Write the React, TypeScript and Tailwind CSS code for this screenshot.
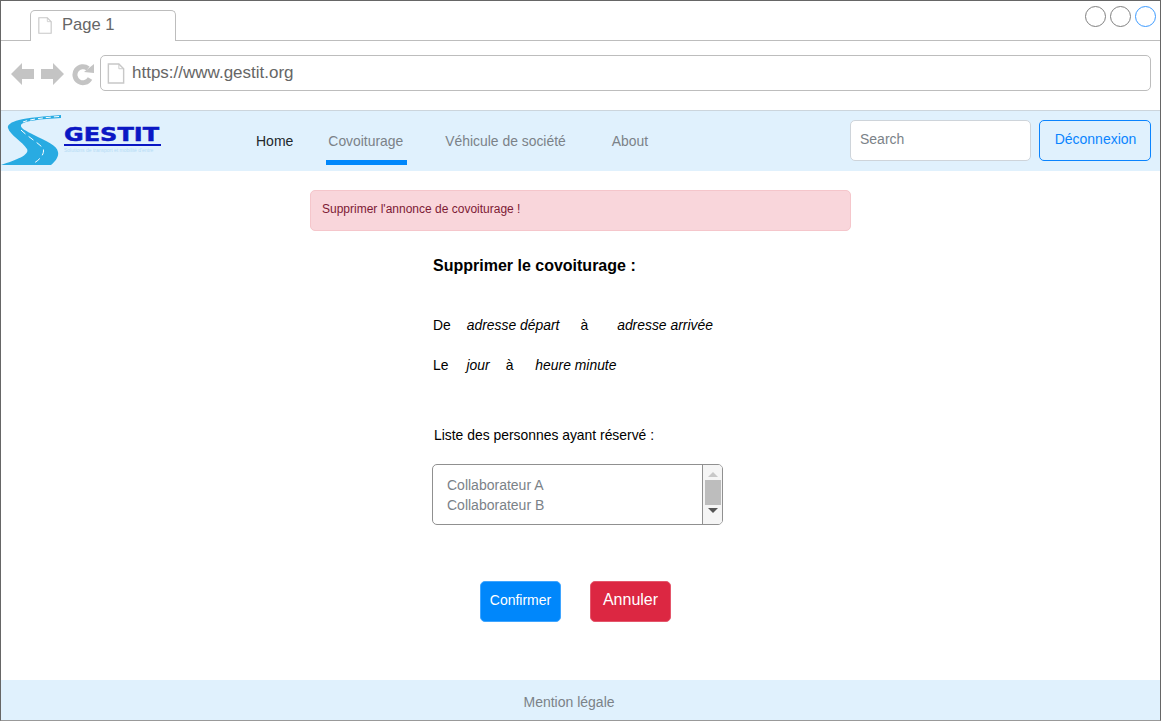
function PageIcon({ className }: { className: string }) {
  return (
    <svg className={className} viewBox="0 0 18 22" fill="#fff" stroke="#c8c8c8" strokeWidth="1.5">
      <path d="M1 1h11l5 5v15H1z" />
      <path d="M12 1v5h5" fill="none" strokeWidth="1" />
    </svg>
  );
}

function NavIcons() {
  return (
    <div className="mt-[7px] flex items-center">
      <svg className="ml-[10px] h-6 w-[23px]" viewBox="0 0 23 24" fill="#c4c4c4">
        <path d="M0 12L11 1v6h12v10H11v6z" />
      </svg>
      <svg className="ml-[7px] h-6 w-[23px]" viewBox="0 0 23 24" fill="#c4c4c4">
        <path d="M23 12L12 1v6H0v10h12v6z" />
      </svg>
      <svg className="ml-[8px] h-6 w-[23px]" viewBox="0 0 23 24" fill="none">
        <path d="M18 16.5A8 8 0 1 1 16 6.5" stroke="#c4c4c4" strokeWidth="5" />
        <path d="M12 10L22 2v9z" fill="#c4c4c4" />
      </svg>
    </div>
  );
}

function Logo() {
  return (
    <div className="flex h-full w-[170px] shrink-0">
      <svg className="mt-[4px] h-[50px] w-[60px] shrink-0" viewBox="0 0 60 50">
        <path
          d="M60 0C45 1 25 3 18 5C10 7 6 10 7 13C9 20 22 27 26 34C29 40 15 45 0 50L50 50C55 46 58 41 57 37C56 30 45 26 33 20C25 16 19 13 20 10C22 6 40 4 60 3Z"
          fill="#29abe2"
        />
        <path d="M58 1.5C44 2.5 30 4 22 7" stroke="#fff" strokeWidth="1" strokeDasharray="5 3" fill="none" />
        <path d="M20 15C26 21 36 27 42 33C44 38 40 44 33 48" stroke="#fff" strokeWidth="1" strokeDasharray="6 4" fill="none" />
      </svg>
      <div className="ml-[3px] mt-[14px] flex w-[97px] flex-col">
        <span className="origin-left scale-x-[1.2] whitespace-nowrap font-['DejaVu_Sans'] text-[20px] font-bold leading-[19px] text-[#0a17c4] [-webkit-text-stroke:0.5px_#0a17c4]">GESTIT</span>
        <div className="h-[2px] w-full bg-[#0a17c4]" />
        <span className="mt-[1px] whitespace-nowrap text-[5px] leading-[6px] text-[#b5dcf5]">Solutions de transport et mobilité d'entre</span>
      </div>
    </div>
  );
}

export default function App() {
  return (
    <div className="flex h-[721px] w-[1161px] flex-col overflow-hidden border border-[#666] border-b-[#999] bg-white font-['Liberation_Sans',sans-serif]">
      {/* browser chrome */}
      <div className="flex h-[40px] shrink-0 items-end justify-between border-b border-[#bdbdbd]">
        <div className="relative top-px ml-[29px] flex h-[31px] w-[146px] items-center rounded-t-[5px] border border-b-0 border-[#bdbdbd] bg-white pb-[2px]">
          <PageIcon className="ml-[6px] h-[17px] w-[16px]" />
          <span className="ml-[9px] text-[16.6px] text-[#666]">Page 1</span>
        </div>
        <div className="mb-[13px] mr-[4px] flex gap-[4px]">
          <div className="size-[21px] rounded-full border border-[#808080]" />
          <div className="size-[21px] rounded-full border border-[#808080]" />
          <div className="size-[21px] rounded-full border border-[#3d9bff]" />
        </div>
      </div>
      <div className="flex h-[69px] shrink-0 items-start pr-[9px] pt-[14px]">
        <NavIcons />
        <div className="ml-[5px] flex h-[36px] flex-1 items-center rounded-[5px] border border-[#bdbdbd]">
          <PageIcon className="ml-[6px] h-[21px] w-[18px]" />
          <span className="ml-[7px] text-[17px] text-[#666]">https://www.gestit.org</span>
        </div>
      </div>

      {/* navbar */}
      <div className="flex h-[61px] shrink-0 border-t border-[#ccd5dc] bg-[#e0f1fd]">
        <Logo />
        <nav className="ml-[85px] flex items-center text-[13.9px] text-[#7b8288]">
          <span className="text-sm text-[#22282c]">Home</span>
          <span className="relative ml-[35px]">
            Covoiturage
            <span className="absolute left-[-2px] top-[29px] h-[5px] w-[81px] bg-[#0087fb]" />
          </span>
          <span className="ml-[42px]">Véhicule de société</span>
          <span className="ml-[46px]">About</span>
        </nav>
        <div className="ml-auto mr-[9px] flex items-center gap-[8px] pb-[2px]">
          <div className="flex h-[41px] w-[181px] items-center rounded-[5px] border border-[#ced4da] bg-white pb-[2px] pl-[9px] text-sm text-[#7b8288]">
            Search
          </div>
          <div className="flex h-[41px] w-[112px] items-center justify-center rounded-[5px] border border-[#0a84ff] pb-[2px] pl-[1px] text-sm text-[#0a84ff]">
            Déconnexion
          </div>
        </div>
      </div>

      {/* content */}
      <main className="flex flex-1 flex-col text-[13.9px] text-black">
        <div className="ml-[309px] mt-[19px] flex h-[41px] w-[541px] items-center rounded-[5px] border border-[#f5c6cb] bg-[#f9d6db] pb-[3px] pl-[11px] text-xs text-[#7d1a35]">
          Supprimer l'annonce de covoiturage !
        </div>
        <div className="ml-[432px] flex flex-col">
          <h1 className="mt-[26px] text-base font-bold leading-[18px]">Supprimer le covoiturage :</h1>
          <p className="mt-[42px] flex h-[16px] items-center leading-4">
            <span>De</span>
            <em className="ml-[16px]">adresse départ</em>
            <span className="ml-[21px]">à</span>
            <em className="ml-[29px]">adresse arrivée</em>
          </p>
          <p className="mt-[24px] flex h-[16px] items-center leading-4">
            <span>Le</span>
            <em className="ml-[18px]">jour</em>
            <span className="ml-[16px]">à</span>
            <em className="ml-[22px]">heure minute</em>
          </p>
          <p className="ml-px mt-[54px] h-[16px] leading-4">Liste des personnes ayant réservé :</p>
          <div className="-ml-px mt-[21px] flex h-[61px] w-[291px] overflow-hidden rounded-[5px] border border-[#909090]">
            <div className="flex flex-1 flex-col pl-[14px] pt-[10px] text-sm leading-[20px] text-[#7b8288]">
              <span>Collaborateur A</span>
              <span>Collaborateur B</span>
            </div>
            <div className="flex w-[20px] flex-col items-center border-l border-[#909090] bg-[#f5f5f5]">
              <svg className="mt-[7px] h-[5px] w-[10px]" viewBox="0 0 10 5" fill="#c8c8c8">
                <path d="M5 0l5 5H0z" />
              </svg>
              <div className="mt-[3px] h-[25px] w-[16px] bg-[#bdbdbd]" />
              <svg className="mt-[3px] h-[5px] w-[10px]" viewBox="0 0 10 5" fill="#555">
                <path d="M0 0h10L5 5z" />
              </svg>
            </div>
          </div>
          <div className="ml-[47px] mt-[56px] flex gap-[29px] text-sm text-white">
            <div className="flex h-[41px] w-[81px] items-center justify-center rounded-[5px] border border-[#3fa5ff] bg-[#0087fb] pb-[4px]">
              Confirmer
            </div>
            <div className="flex h-[41px] w-[81px] items-center justify-center rounded-[5px] border border-[#e4566b] bg-[#dc2742] pb-[4px] text-base">
              Annuler
            </div>
          </div>
        </div>
      </main>

      <footer className="flex h-[40px] shrink-0 items-center justify-center bg-[#e0f1fd] pr-[23px] pt-[4px] text-sm text-[#7b8288]">
        Mention légale
      </footer>
    </div>
  );
}
